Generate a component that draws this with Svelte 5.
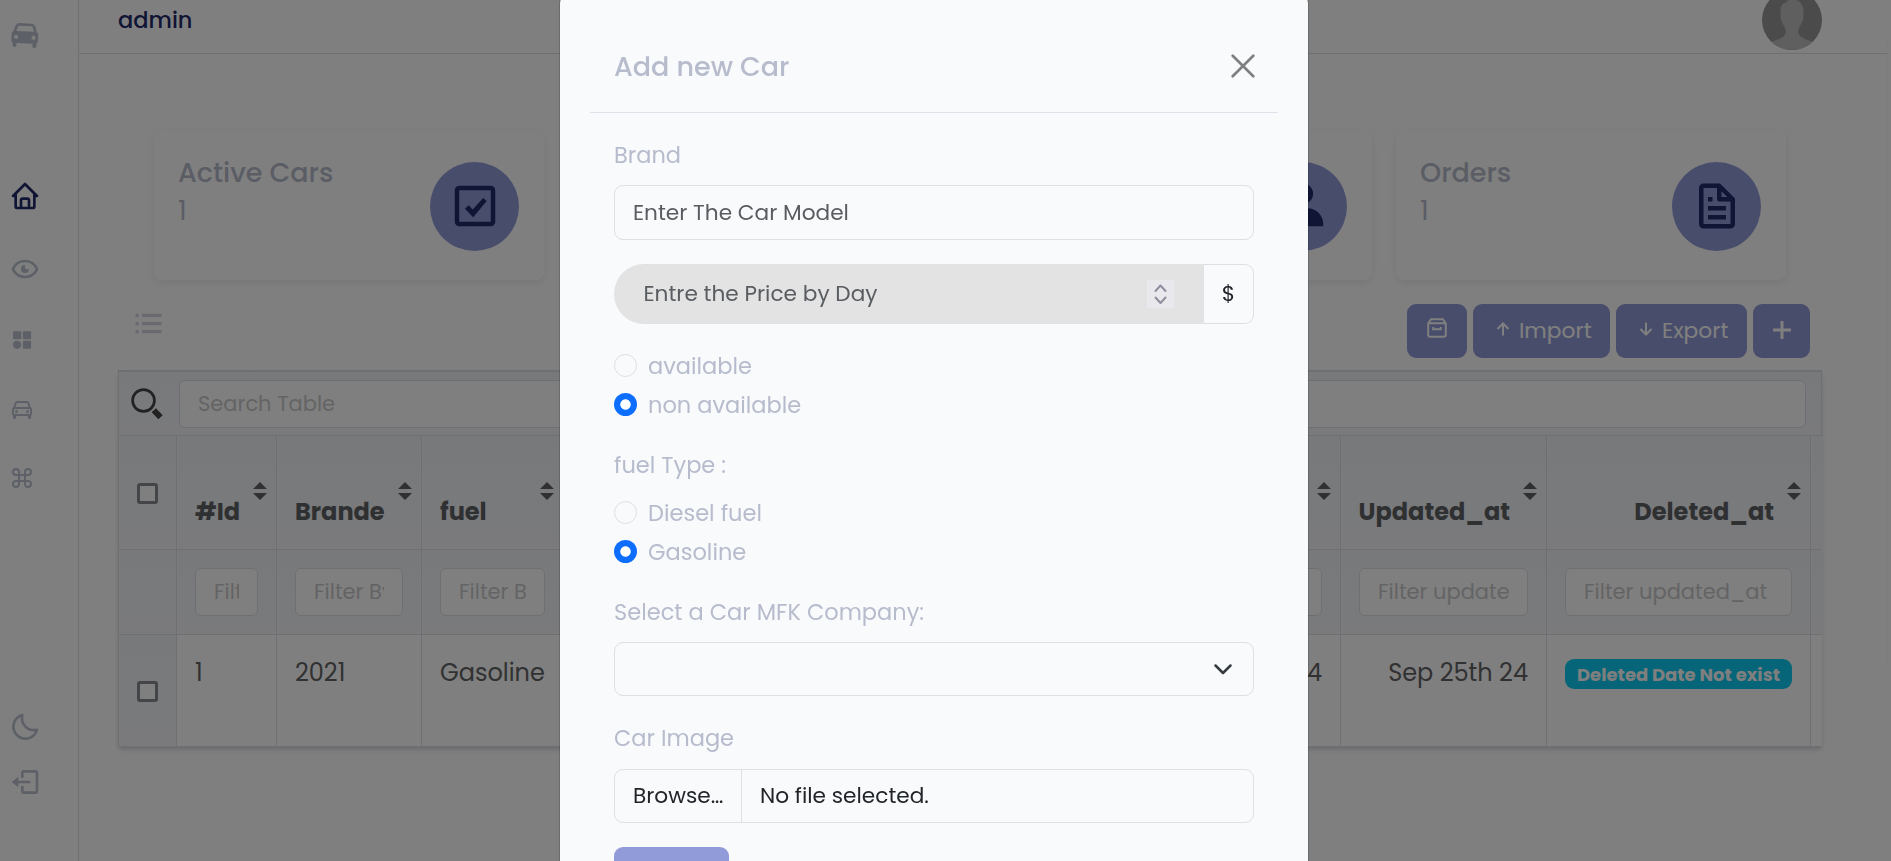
<script>
  const cards = [
    { title: 'Active Cars', value: '1', icon: 'check' },
    { title: '', value: '', icon: 'check' },
    { title: '', value: '', icon: 'user' },
    { title: 'Orders', value: '1', icon: 'file' }
  ];

  const columns = [
    { title: '#Id', filter: 'Filter', value: '1' },
    { title: 'Brande', filter: 'Filter By', value: '2021' },
    { title: 'fuel', filter: 'Filter B', value: 'Gasoline' },
    { title: '', filter: '', value: '' },
    { title: '', filter: '', value: 'Sep 25th 24', end: true },
    { title: 'Updated_at', filter: 'Filter update', value: 'Sep 25th 24', end: true },
    { title: 'Deleted_at', filter: 'Filter updated_at', badge: 'Deleted Date Not exist', end: true }
  ];

  const availability = [
    { label: 'available', checked: false },
    { label: 'non available', checked: true }
  ];
  const fuels = [
    { label: 'Diesel fuel', checked: false },
    { label: 'Gasoline', checked: true }
  ];
</script>

{#snippet radios(options)}
  {#each options as o}
    <div class="radio-row">
      <i class="radio" class:checked={o.checked}></i>
      <span>{o.label}</span>
    </div>
  {/each}
{/snippet}

<div class="page">
  <nav class="sidebar">
    <svg class="i-brand" viewBox="0 0 24 24"><path d="m20.772 10.156-1.368-4.105A2.995 2.995 0 0 0 16.559 4H7.441a2.995 2.995 0 0 0-2.845 2.051l-1.368 4.105A2.003 2.003 0 0 0 2 12v5c0 .753.423 1.402 1.039 1.743-.013.066-.039.126-.039.195V21a1 1 0 0 0 1 1h1a1 1 0 0 0 1-1v-2h12v2a1 1 0 0 0 1 1h1a1 1 0 0 0 1-1v-2.062c0-.069-.026-.13-.039-.195A1.993 1.993 0 0 0 22 17v-5c0-.829-.508-1.541-1.228-1.844zM7.441 6h9.117c.431 0 .813.274.949.684L18.613 10H5.387l1.105-3.316A1 1 0 0 1 7.441 6zM5.5 16a1.5 1.5 0 1 1 .001-3.001A1.5 1.5 0 0 1 5.5 16zm13 0a1.5 1.5 0 1 1 .001-3.001A1.5 1.5 0 0 1 18.5 16z"/></svg>
    <svg class="i-home" viewBox="0 0 24 24"><path d="M3 13h1v7c0 1.103.897 2 2 2h12c1.103 0 2-.897 2-2v-7h1a1 1 0 0 0 .707-1.707l-9-9a.999.999 0 0 0-1.414 0l-9 9A1 1 0 0 0 3 13zm7 7v-5h4v5h-4zm2-15.586 6 6V15l.001 5H16v-5c0-1.103-.897-2-2-2h-4c-1.103 0-2 .897-2 2v5H6v-9.586l6-6z"/></svg>
    <svg class="i-eye" viewBox="0 0 24 24"><path d="M12 5c-7.633 0-9.927 6.617-9.948 6.684L1.946 12l.105.316C2.073 12.383 4.367 19 12 19s9.927-6.617 9.948-6.684l.106-.316-.105-.316C21.927 11.617 19.633 5 12 5zm0 12c-5.351 0-7.424-3.846-7.926-5C4.578 10.842 6.652 7 12 7c5.351 0 7.424 3.846 7.926 5-.504 1.158-2.578 5-7.926 5z"/><path d="M12 9a3 3 0 1 0 3 3c-.6.4-1.3.5-2 .1-.9-.5-1.4-1.4-1.1-2.3z"/></svg>
    <svg class="small i-grid" viewBox="0 0 24 24"><rect x="3" y="3.2" width="8.3" height="8" rx="1"/><rect x="12.8" y="3.2" width="8.3" height="8" rx="1"/><circle cx="7.1" cy="16.8" r="4.1"/><rect x="12.8" y="12.8" width="8.3" height="8" rx="1"/></svg>
    <svg class="small i-car" viewBox="0 0 24 24"><path d="m20.772 10.155-1.368-4.104A2.995 2.995 0 0 0 16.559 4H7.441a2.995 2.995 0 0 0-2.845 2.051l-1.368 4.104A2 2 0 0 0 2 12v5c0 .738.404 1.376 1 1.723V21a1 1 0 0 0 1 1h1a1 1 0 0 0 1-1v-2h12v2a1 1 0 0 0 1 1h1a1 1 0 0 0 1-1v-2.277A1.99 1.99 0 0 0 22 17v-5a2 2 0 0 0-1.228-1.845zM7.441 6h9.117c.431 0 .813.274.949.684L18.613 10H5.387l1.105-3.316A1 1 0 0 1 7.441 6zM4 17v-5h16l.001 5H4z"/><circle cx="6.5" cy="14.5" r="1.5"/><circle cx="17.5" cy="14.5" r="1.5"/></svg>
    <svg class="small line i-cmd" viewBox="0 0 24 24"><path d="M18 3a3 3 0 0 0-3 3v12a3 3 0 1 0 3-3H6a3 3 0 1 0 3 3V6a3 3 0 1 0-3 3h12a3 3 0 0 0 0-6z"/></svg>
    <svg class="i-moon" viewBox="0 0 24 24"><path d="M20.742 13.045a8.088 8.088 0 0 1-2.077.271c-2.135 0-4.14-.83-5.646-2.336a8.025 8.025 0 0 1-2.064-7.723A1 1 0 0 0 9.73 2.034a10.014 10.014 0 0 0-4.489 2.582c-3.898 3.898-3.898 10.243 0 14.143a9.937 9.937 0 0 0 7.072 2.93 9.93 9.93 0 0 0 7.07-2.929 10.007 10.007 0 0 0 2.583-4.491 1.001 1.001 0 0 0-1.224-1.224zm-2.772 4.301a7.947 7.947 0 0 1-5.656 2.343 7.953 7.953 0 0 1-5.658-2.344c-3.118-3.119-3.118-8.195 0-11.314a7.923 7.923 0 0 1 2.06-1.483 10.027 10.027 0 0 0 2.89 7.848 9.972 9.972 0 0 0 7.848 2.891 8.036 8.036 0 0 1-1.484 2.059z"/></svg>
    <svg class="i-exit" viewBox="0 0 24 24"><path d="m2 12 5 4v-3h9v-2H7V8z"/><path d="M20 3h-9c-1.103 0-2 .897-2 2v4h2V5h9v14h-9v-4H9v4c0 1.103.897 2 2 2h9c1.103 0 2-.897 2-2V5c0-1.103-.897-2-2-2z"/></svg>
  </nav>

  <main>
    <header class="topbar">
      <span class="user">admin</span>
      <svg class="avatar" viewBox="0 0 60 60">
        <defs><clipPath id="round"><circle cx="30" cy="30" r="30"/></clipPath></defs>
        <g clip-path="url(#round)">
          <rect width="60" height="60" fill="#979797"/>
          <path fill="#bfbfbf" d="M30 9c-3-.4-5 2-5.500 3.500C20 13 18.300 17 18.700 22c.2 3-.8 5 .3 7.500 1.200 5 5 7.500 4.700 12C23.500 47 19 48.500 9 52v9h42v-9c-10-3.500-14.500-5-14.700-10.500-.1-4.500 3.500-7 4.700-12 1-2.500.2-4.500.4-7.500C41.700 14 37 9.500 30 9z"/>
        </g>
      </svg>
    </header>

    <section class="cards">
      {#each cards as c}
        <article class="card">
          <div>
            <h3>{c.title}</h3>
            <p>{c.value}</p>
          </div>
          <div class="disc">
            <svg viewBox="0 0 24 24">
              {#if c.icon === 'check'}
                <path d="M19 3H5a2 2 0 0 0-2 2v14a2 2 0 0 0 2 2h14a2 2 0 0 0 2-2V5a2 2 0 0 0-2-2zM5 19V5h14v14z"/>
                <path d="M11 13.600 9.200 11.700 7.500 13.200 11.200 17 17.200 9.800 15.600 8.400z"/>
              {:else if c.icon === 'user'}
                <path d="M7.500 6.500C7.500 8.981 9.519 11 12 11s4.500-2.019 4.500-4.500S14.481 2 12 2 7.500 4.019 7.500 6.500zM20 21h1v-1c0-3.859-3.141-7-7-7h-4c-3.860 0-7 3.141-7 7v1h17z"/>
              {:else}
                <path d="M19.903 8.586a.997.997 0 0 0-.196-.293l-6-6a.997.997 0 0 0-.293-.196c-.03-.014-.062-.022-.094-.033a.991.991 0 0 0-.259-.051C13.040 2.011 13.021 2 13 2H6c-1.103 0-2 .897-2 2v16c0 1.103.897 2 2 2h12c1.103 0 2-.897 2-2V9c0-.021-.011-.04-.013-.062a.952.952 0 0 0-.051-.259c-.01-.032-.019-.063-.033-.093zM16.586 8H14V5.414L16.586 8zM6 20V4h6v5a1 1 0 0 0 1 1h5l.002 10H6z"/><path d="M8 12h8v2H8zm0 4h8v2H8zm0-8h2v2H8z"/>
              {/if}
            </svg>
          </div>
        </article>
      {/each}
    </section>

    <section class="toolbar">
      <svg class="list" viewBox="0 0 24 24"><path d="M4 6h2v2H4zm0 5h2v2H4zm0 5h2v2H4zM8 6h12v2H8zm0 5h12v2H8zm0 5h12v2H8z"/></svg>
      <div class="actions">
        <button class="btn archive" aria-label="Archive"><svg viewBox="0 0 20 20"><path d="M1.200 5.500 4 1.200h12l2.800 4.300v11.300a2 2 0 0 1-2 2H3.200a2 2 0 0 1-2-2zM1.500 5.200h17M6.200 9v2.300h7.600V9"/></svg></button>
        <button class="btn import"><svg viewBox="0 0 14 14"><path d="M7 13.500V1.500M1.500 7 7 1.500 12.500 7"/></svg><span>Import</span></button>
        <button class="btn export"><svg viewBox="0 0 14 14"><path d="M7 .5v12M1.500 7 7 12.500 12.500 7"/></svg><span>Export</span></button>
        <button class="btn plus" aria-label="Add"><svg viewBox="0 0 18 18"><path d="M9 0v18M0 9h18"/></svg></button>
      </div>
    </section>

    <section class="table">
      <div class="search">
        <svg viewBox="0 0 32 32"><circle cx="12.500" cy="12.500" r="10.900"/><path d="m22.800 22.300 6.700 7"/></svg>
        <div class="field">Search Table</div>
      </div>
      <div class="row head">
        <div class="cell mark"><i class="box"></i></div>
        {#each columns as c}
          <div class="cell title" class:end={c.end}>
            <span>{c.title}</span>
            <svg class="sort" viewBox="0 0 14 18"><path d="M7 0l7 7H0zM7 18l7-7H0z"/></svg>
          </div>
        {/each}
        <div class="cell last"></div>
      </div>
      <div class="row filters">
        <div class="cell mark"></div>
        {#each columns as c}
          <div class="cell"><div class="field"><div class="clip">{c.filter}</div></div></div>
        {/each}
        <div class="cell last"></div>
      </div>
      <div class="row data">
        <div class="cell mark"><i class="box"></i></div>
        {#each columns as c}
          <div class="cell" class:end={c.end}>
            {#if c.badge}
              <b class="badge">{c.badge}</b>
            {:else}
              <span>{c.value}</span>
            {/if}
          </div>
        {/each}
        <div class="cell last"></div>
      </div>
    </section>
  </main>
  <i class="scrollbar"></i>
</div>

<div class="backdrop">
  <form class="modal">
    <div class="modal-head">
      <h2>Add new Car</h2>
      <svg class="close" viewBox="0 0 24 24"><path d="m1.700 1.700 20.600 20.600M22.300 1.700 1.700 22.300"/></svg>
    </div>
    <div class="modal-body">
      <div class="label">Brand</div>
      <div class="control brand">Enter The Car Model</div>
      <div class="group">
        <div class="price">
          <span>Entre the Price by Day</span>
          <svg class="spin" viewBox="0 0 27 28"><path d="m8.500 11 5-5.500 5 5.500M8.500 17.500l5 5.500 5-5.500"/></svg>
        </div>
        <div class="unit">$</div>
      </div>
      <div class="options">{@render radios(availability)}</div>
      <div class="label fuel">fuel Type :</div>
      <div class="options fuels">{@render radios(fuels)}</div>
      <div class="label company">Select a Car MFK Company:</div>
      <div class="control select">
        <svg viewBox="0 0 18 11"><path d="m1.500 1.500 7.500 7.500 7.500-7.500"/></svg>
      </div>
      <div class="label image">Car Image</div>
      <div class="control file">
        <div class="browse">Browse…</div>
        <div class="name">No file selected.</div>
      </div>
      <button class="submit" type="button" aria-label="Submit"></button>
    </div>
  </form>
</div>

<style>
  :global(body) { margin: 0; overflow: hidden; background: #fff; }
  .page, .backdrop { font-family: Poppins, Inter, sans-serif; font-size: 22.500px; box-sizing: border-box; }
  .page :global(*), .backdrop :global(*) { box-sizing: border-box; }
  .page { display: flex; width: 100%; height: 861px; overflow: hidden; background: #fff; position: relative; }
  span { white-space: pre; }
  h2, h3, p { margin: 0; }
  button { font: inherit; border: 0; padding: 0; }

  .sidebar { width: 79px; flex: none; border-right: 1px solid #dedee2; padding-left: 9.500px; display: flex; flex-direction: column; }
  .sidebar svg { width: 32px; height: 32px; flex: none; margin-left: -.5px; fill: #bcc0d0; }
  .sidebar svg.small { width: 24px; height: 24px; margin-left: 0; }
  .sidebar svg.line { fill: none; stroke: #bcc0d0; stroke-width: 2; }
  .i-brand { margin-top: 18px; transform: rotate(3deg); }
  .sidebar .i-home { margin-top: 130px; fill: #20296a; }
  .i-eye { margin-top: 40.500px; }
  .i-grid { margin-top: 43px; }
  .i-car { margin-top: 45.500px; }
  .i-cmd { margin-top: 45px; }
  .i-moon { margin-top: 220.500px; }
  .i-exit { margin-top: 23px; }

  main { flex: 1; min-width: 0; display: flex; flex-direction: column; }
  .topbar { height: 64px; flex: none; margin-top: -10px; padding: 0 69px 0 39px; border-bottom: 1px solid #dedee2; display: flex; justify-content: space-between; align-items: flex-start; line-height: 60px; }
  .user { color: #20296a; font-weight: 500; font-size: 22.500px; }
  .avatar { width: 60px; height: 60px; }

  .cards { display: flex; gap: 24px; margin: 76px 0 0 74.500px; }
  .card { width: 390px; height: 150px; flex: none; border-radius: 8px; box-shadow: 0 3px 8px rgba(0, 0, 0, .08); padding: 22px 24.500px 0; display: flex; justify-content: space-between; color: #b7bbcb; }
  .card h3 { font-weight: 500; font-size: 27px; line-height: 42px; height: 42px; }
  .card p { font-size: 27px; line-height: 33px; }
  .disc { width: 89px; height: 89px; margin-top: 9.500px; border-radius: 50%; background: #929bd8; display: flex; align-items: center; justify-content: center; }
  .disc svg { width: 54px; height: 54px; fill: #20296a; }

  .toolbar { display: flex; justify-content: space-between; height: 54px; margin-top: 24px; padding: 0 81px 0 50px; align-items: flex-start; }
  .list { width: 39px; height: 39px; fill: #d2d2de; }
  .actions { display: flex; gap: 6px; }
  .btn { height: 54px; border-radius: 9px; background: #929bd8; color: #fff; font-size: 21.800px; display: flex; align-items: center; }
  .btn span { margin-bottom: 1px; }
  .btn svg { fill: none; stroke: #fff; flex: none; }
  .archive { width: 60px; justify-content: center; }
  .archive svg { width: 20px; height: 20px; stroke-width: 2; margin-bottom: 6px; }
  .import { width: 137px; padding-left: 23px; }
  .export { width: 131px; padding-left: 23px; }
  .import svg, .export svg { width: 14px; height: 14px; stroke-width: 2; margin: 0 9px 5px 0; }
  .plus { width: 57px; justify-content: center; }
  .plus svg { width: 18px; height: 18px; stroke-width: 3; margin-bottom: 2px; }

  .table { margin: 12px 69px 0 39px; height: 377px; border-left: 1px solid #dcdfe6; box-shadow: 0 3px 5px -1px rgba(30, 30, 70, .22); }
  .search { height: 66px; border-top: 2px solid #dcdfe6; border-right: 1px solid #dcdfe6; border-bottom: 1px solid #dcdfe6; background: linear-gradient(#f1f3f6, #f4f5f8); display: flex; align-items: center; padding: 0 15px 0 12px; }
  .search svg { width: 32px; height: 32px; margin-right: 16px; fill: none; stroke: #444; stroke-width: 2.700; }
  .search svg path { stroke-width: 6; stroke-linecap: butt; }
  .field { height: 48px; border: 1px solid #dcdfe6; border-radius: 6px; background: #fff; color: #c9c9ca; font-size: 21px; display: flex; align-items: center; padding: 0 18px; white-space: nowrap; }
  .search .field { flex: 1; }
  .row { display: grid; grid-template-columns: 58px 100px 145px 142px 577px 200px 206px 264px 1fr; }
  .cell { border-right: 1px solid #dcdfe6; border-bottom: 1px solid #dcdfe6; min-width: 0; position: relative; }
  .cell.last { border-right: 0; }
  .head, .filters, .mark { background: linear-gradient(#f1f3f7, #f4f5f8); }
  .head .cell, .filters .cell, .mark { box-shadow: inset 1px 0 #f9f9fb, inset 0 -1px #f9f9fb; }
  .mark { display: flex; align-items: center; justify-content: center; }
  .box { width: 21px; height: 21px; margin-top: 2px; border: 3px solid #898a93; border-radius: 3px; background: #fff; }
  .row.head { height: 114px; }
  .title { display: flex; align-items: flex-end; padding: 0 37px 20px 18px; font-weight: 700; font-size: 24px; line-height: 35px; color: #5f6063; }
  .title.end { justify-content: flex-end; padding-right: 36px; }
  .sort { position: absolute; right: 9px; top: 46px; width: 14px; height: 18px; fill: #606163; }
  .filters { height: 85px; }
  .filters .cell { padding: 18px; }
  .filters .field { padding-bottom: 1px; }
  .clip { overflow: hidden; }
  .data { height: 112px; font-size: 24px; line-height: 36px; color: #626365; }
  .data .cell { padding: 20px 18px 0; }
  .data .cell.mark, .row .cell.last { padding: 0; }
  .data .end { text-align: right; }
  .badge { display: block; height: 30px; margin-top: 4px; border-radius: 9px; background: #0dcaf0; color: #fff; font-size: 18px; line-height: 31px; text-align: center; white-space: nowrap; }
  .scrollbar { position: absolute; right: 0; top: 38px; width: 4px; height: 627px; background: #fff; border-left: 1px solid #fafafa; }

  .backdrop { position: fixed; inset: 0; background: rgba(0, 0, 0, .5); overflow: hidden; }
  .modal { width: 748px; height: 940px; margin: -8px 0 0 560px; background: #f9fafc; border-radius: 12px; box-shadow: 0 0 0 1px rgba(0, 0, 0, .16); color: #b7bccd; }
  .modal-head { height: 121px; margin: 0 30px; padding: 28px 23px 0 24px; border-bottom: 1px solid #dfe1ea; display: flex; justify-content: space-between; align-items: center; }
  .modal-head h2 { font-size: 27px; font-weight: 500; padding-top: 1px; }
  .close { width: 24px; height: 24px; fill: none; stroke: #7e7f80; stroke-width: 2.700; stroke-linecap: round; }
  .modal-body { padding: 26px 54px 0; }
  .label { height: 32px; line-height: 33px; margin-bottom: 14px; }
  .control { height: 55px; border: 1px solid #dedfe4; border-radius: 9px; display: flex; align-items: center; font-size: 21.650px; }
  .brand { padding-left: 18px; color: #595c60; }
  .group { display: flex; height: 60px; margin-top: 24px; font-size: 21.650px; }
  .price { width: 590px; background: #e3e3e3; border-radius: 30px 0 0 30px; display: flex; align-items: center; justify-content: space-between; padding: 0 30px 1px 29.500px; color: #595c60; }
  .spin { width: 27px; height: 28px; background: #e9e8ed; fill: none; stroke: #8f8f9d; stroke-width: 2; stroke-linecap: round; stroke-linejoin: round; }
  .unit { width: 50px; border: 1px solid #dedfe4; border-left: 0; border-radius: 0 9px 9px 0; display: flex; align-items: center; justify-content: center; padding-bottom: 1px; color: #212529; }
  .options { margin-top: 22px; }
  .radio-row { height: 39px; display: flex; align-items: center; gap: 11px; }
  .radio { width: 23px; height: 23px; border-radius: 50%; border: 1px solid #dedfe4; }
  .radio.checked { border: 0; background: radial-gradient(circle, #fff 4.800px, #0d6efd 5.600px); }
  .fuel { margin: 25px 0 12px; }
  .fuels { margin: 0 0 25px; }
  .select { height: 54px; justify-content: flex-end; padding-right: 21px; }
  .select svg { width: 18px; height: 11px; fill: none; stroke: #343a40; stroke-width: 2.500; stroke-linecap: round; stroke-linejoin: round; }
  .image { margin: 26px 0 15px; }
  .file { height: 54px; color: #212529; }
  .browse { width: 127px; height: 52px; line-height: 51px; padding-left: 18px; border-right: 1px solid #dedfe4; }
  .name { padding: 0 0 1px 18px; }
  .submit { display: block; width: 115px; height: 54px; margin-top: 24px; border-radius: 9px; background: #929bd9; }
</style>
